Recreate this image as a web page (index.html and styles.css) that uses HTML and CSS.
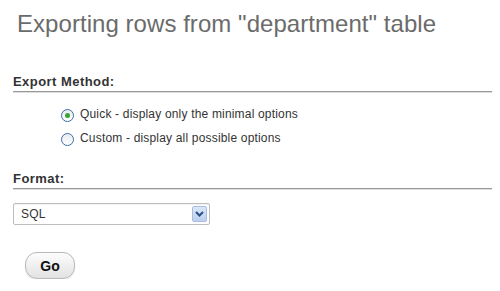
FILE: index.html
```html
<!DOCTYPE html>
<html lang="en">
<head>
    <meta charset="UTF-8">
    <title>Export</title>
    <link rel="stylesheet" href="styles.css">
</head>
<body>
    <h1 class="page-title">Exporting rows from "department" table</h1>

    <div class="section">
        <h3 class="section-title">Export Method:</h3>
        <ul class="options">
            <li>
                <label class="radio-row">
                    <input type="radio" name="method" checked>
                    <span class="radio"></span>
                    Quick - display only the minimal options
                </label>
            </li>
            <li>
                <label class="radio-row">
                    <input type="radio" name="method">
                    <span class="radio"></span>
                    Custom - display all possible options
                </label>
            </li>
        </ul>
    </div>

    <div class="section">
        <h3 class="section-title">Format:</h3>
        <div class="select">
            <span class="select-value">SQL</span>
            <span class="select-arrow">
                <svg width="9" height="6" viewBox="0 0 9 6"><path d="M1 1 L4.5 4.5 L8 1" fill="none" stroke="#2a4f86" stroke-width="2"/></svg>
            </span>
        </div>
    </div>

    <button class="go-button">Go</button>
</body>
</html>
```

FILE: styles.css
```css
body {
    margin: 0;
    padding: 0 8px 0 13px;
    font-family: 'Liberation Sans', Arial, sans-serif;
    background: #fff;
    color: #333;
}

.page-title {
    font-weight: normal;
    font-size: 24px;
    color: #6b6b6b;
    margin: 10px 0 0 4px;
    line-height: 28px;
    letter-spacing: 0.05px;
}

.section {
    margin-top: 37px;
}

.section + .section {
    margin-top: 21px;
}

.section-title {
    font-size: 13px;
    font-weight: bold;
    color: #333;
    margin: 0;
    padding-bottom: 2px;
    line-height: 14px;
    letter-spacing: 0.45px;
    border-bottom: 1px solid #999;
    box-shadow: 0 1px 0 #ddd;
}

.options {
    list-style: none;
    margin: 11px 0 0 0;
    padding: 0 0 0 48px;
}

.options li {
    height: 24px;
}

.radio-row {
    display: flex;
    align-items: center;
    gap: 6px;
    font-size: 12px;
    letter-spacing: 0.18px;
    color: #333;
    height: 22px;
}

.radio-row input {
    display: none;
}

.radio {
    width: 11px;
    height: 11px;
    border: 1px solid #3c6fa8;
    border-radius: 50%;
    background: linear-gradient(#e8eaee, #fff);
    position: relative;
    margin-top: 2px;
}

.radio-row input:checked + .radio::before {
    content: "";
    position: absolute;
    width: 5px;
    height: 5px;
    top: 3px;
    left: 3px;
    border-radius: 50%;
    background: #37a435;
}

.select {
    margin-top: 14px;
    width: 197px;
    height: 22px;
    box-sizing: border-box;
    border: 1px solid #bdbdbd;
    border-radius: 2px;
    box-shadow: inset 0 1px 1px rgba(0, 0, 0, 0.06);
    display: flex;
    align-items: center;
    justify-content: space-between;
    padding: 0 2px 0 7px;
    font-size: 12px;
    letter-spacing: 0.2px;
    color: #333;
}

.select-arrow {
    width: 15px;
    height: 16px;
    box-sizing: border-box;
    border: 1px solid #a9bde0;
    background: linear-gradient(#dbe6f8, #bcd0f0);
    border-radius: 2px;
    display: flex;
    align-items: center;
    justify-content: center;
}

.go-button {
    display: block;
    margin: 27px 0 0 12px;
    width: 50px;
    height: 27px;
    border: 1px solid #b8b8b8;
    border-radius: 12px;
    background: linear-gradient(#fdfdfd, #e2e2e2);
    font-family: 'Liberation Sans', Arial, sans-serif;
    font-size: 14px;
    font-weight: bold;
    color: #111;
    box-shadow: 0 1px 1px rgba(0, 0, 0, 0.1);
}
```
